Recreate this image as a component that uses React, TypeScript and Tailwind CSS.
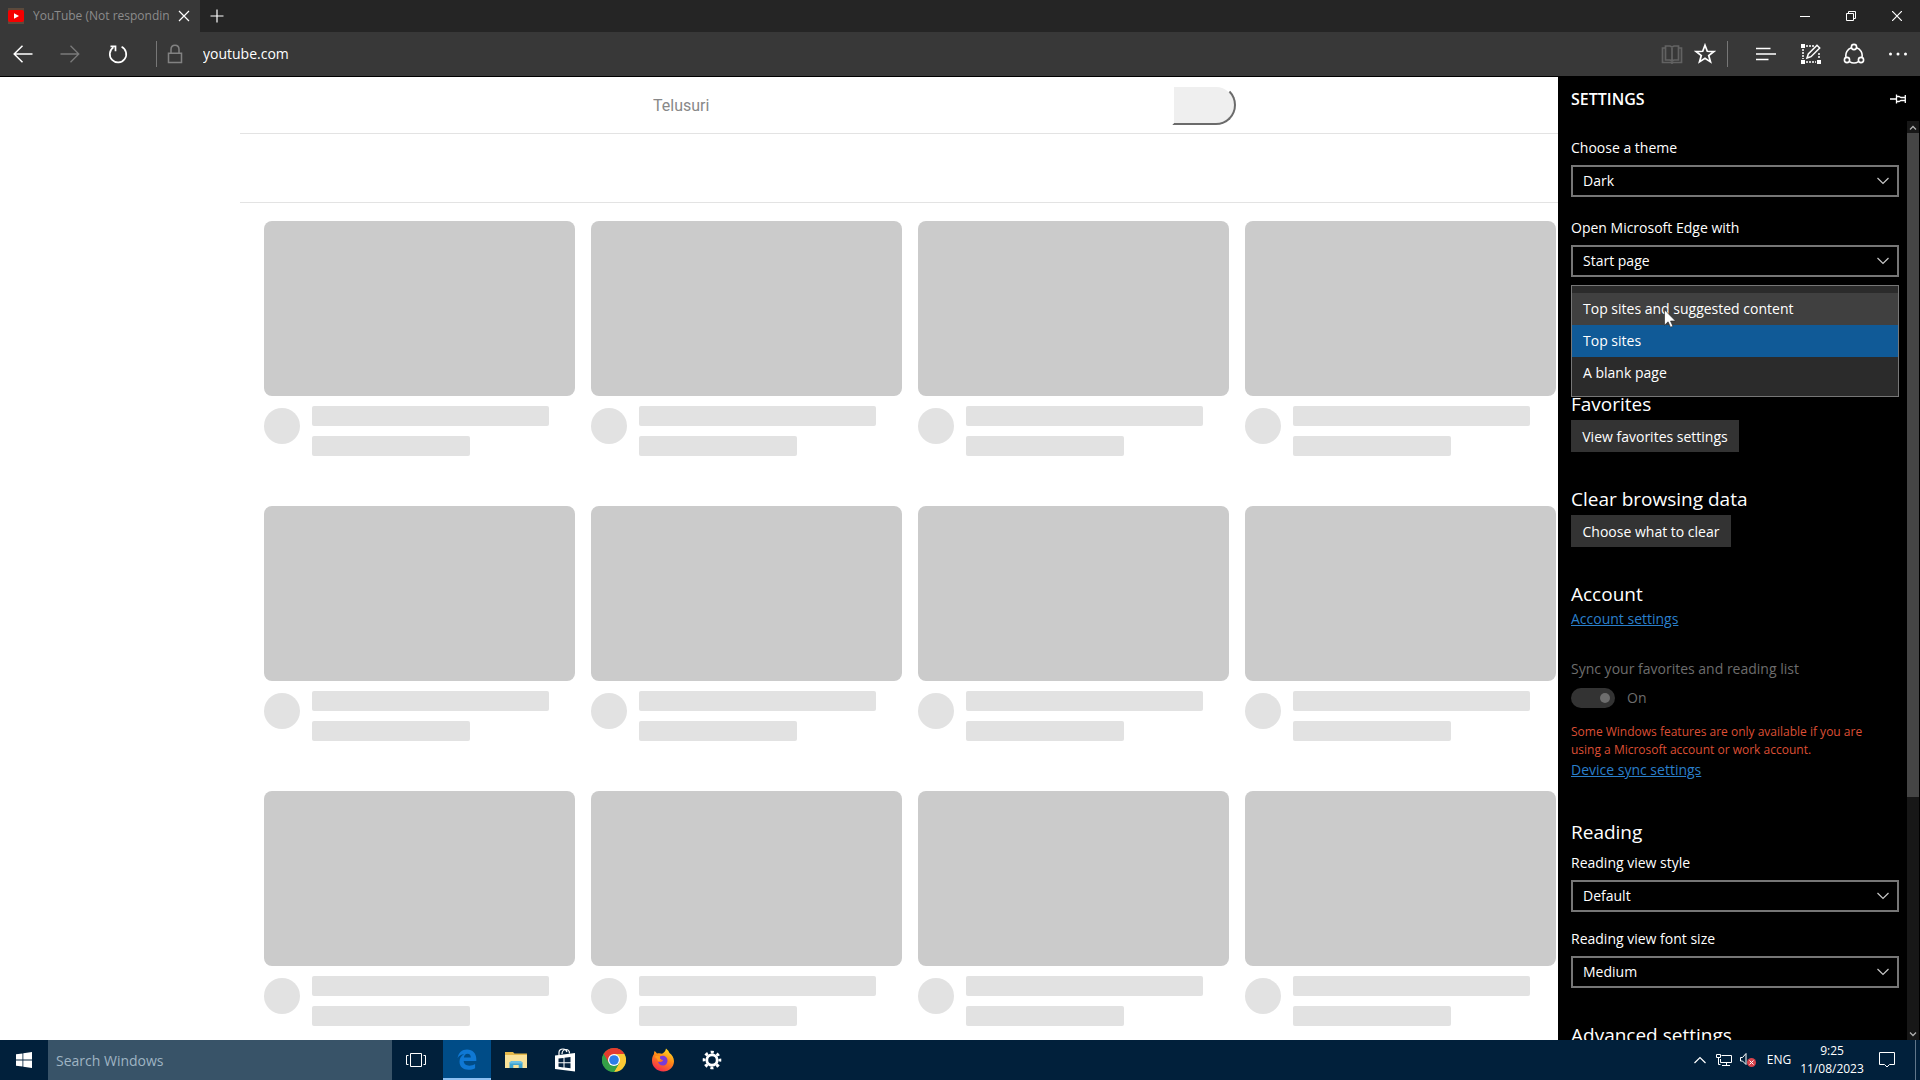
import React from 'react';

const UI = "font-['Open_Sans','Noto_Sans',sans-serif]";

type SvgProps = { w: number; h: number; className?: string; sw?: number; children: React.ReactNode };

function Icon({ w, h, className = '', sw = 1, children }: SvgProps) {
  return (
    <svg
      width={w}
      height={h}
      viewBox={`0 0 ${w} ${h}`}
      fill="none"
      stroke="currentColor"
      strokeWidth={sw}
      className={'shrink-0 ' + className}
      aria-hidden="true"
    >
      {children}
    </svg>
  );
}

function IconButton({ label, className = '', children }: { label: string; className?: string; children: React.ReactNode }) {
  return (
    <button type="button" aria-label={label} className={'flex h-full shrink-0 items-center justify-center ' + className}>
      {children}
    </button>
  );
}

function TabBar() {
  return (
    <div className="flex h-8 shrink-0 bg-[#252525] text-white">
      <div className="flex w-50 items-center bg-[#383838] pl-2">
        <svg width="16" height="16" viewBox="0 0 16 16" className="shrink-0" aria-hidden="true">
          <rect width="16" height="16" fill="#5c4a3c" />
          <rect y="2" width="16" height="12" rx="2" fill="#f40000" />
          <path d="M6 5.2 11 8 6 10.8Z" fill="#fff" />
        </svg>
        <span className="ml-[9px] w-[136px] overflow-hidden whitespace-nowrap text-[12px] leading-5 text-[#8c8c8c]">
          YouTube (Not responding)
        </span>
        <IconButton label="Close tab" className="ml-[3px] w-6">
          <Icon w={12} h={12} sw={1.2}>
            <path d="M1 1l10 10M11 1L1 11" />
          </Icon>
        </IconButton>
      </div>
      <IconButton label="New tab" className="w-[34px]">
        <Icon w={14} h={14} sw={1.2}>
          <path d="M7 .5v13M.5 7h13" />
        </Icon>
      </IconButton>
      <div className="flex-1" />
      <IconButton label="Minimize" className="w-[46px]">
        <Icon w={10} h={10}>
          <path d="M0 5.5h10" />
        </Icon>
      </IconButton>
      <IconButton label="Restore" className="w-[46px]">
        <Icon w={10} h={10}>
          <path d="M.5 2.5h7v7h-7zM2.5 2.5v-2h7v7h-2" />
        </Icon>
      </IconButton>
      <IconButton label="Close" className="w-[46px]">
        <Icon w={10} h={10} sw={1.2}>
          <path d="M0 0l10 10M10 0L0 10" />
        </Icon>
      </IconButton>
    </div>
  );
}

function Toolbar() {
  return (
    <div className="flex h-[45px] shrink-0 items-center border-b border-black bg-[#383838] text-white">
      <IconButton label="Back" className="w-[46px]">
        <Icon w={20} h={18} sw={1.5}>
          <path d="M19.500 9H1M9.500 .7 1.200 9l8.300 8.300" />
        </Icon>
      </IconButton>
      <IconButton label="Forward" className="w-12 text-[#7a7a7a]">
        <Icon w={20} h={18} sw={1.300}>
          <path d="M.5 9H19M10.500 .7 18.800 9l-8.300 8.300" />
        </Icon>
      </IconButton>
      <IconButton label="Refresh" className="w-12">
        <Icon w={20} h={20} sw={1.700}>
          <path d="M13.600 2.800a8.200 8.200 0 1 1-8.200 .6M2.500 2.300h5v5" />
        </Icon>
      </IconButton>
      <div className="ml-[14px] h-[26px] w-px bg-[#777]" />
      <Icon w={16} h={20} sw={1.500} className="ml-[10px] text-[#828282]">
        <path d="M1.500 9.200h13v9.300h-13zM4 9V5.500C4 3 5.500 1.200 8 1.200S12 3 12 5.500V9" />
      </Icon>
      <input
        aria-label="Address"
        defaultValue="youtube.com"
        className="ml-5 min-w-0 flex-1 bg-transparent text-[14px] leading-6 text-white outline-none"
      />
      <IconButton label="Reading view" className="w-8 text-[#626262]">
        <Icon w={22} h={20} sw={1.700}>
          <path d="M4.500 2H9l2 1 2-1h4.500v14H13l-2 1-2-1H4.500zM11 3v14M4.500 4H1.500v14.500H10l1 .7 1-.7h8.500V4h-3" />
        </Icon>
      </IconButton>
      <IconButton label="Add to favorites" className="w-[34px]">
        <Icon w={22} h={22} sw={1.700}>
          <path d="M11 2.200l2.300 6.100 6.500 .3-5.100 4 1.800 6.300L11 15.300l-5.500 3.600 1.800-6.300-5.100-4 6.500-.3z" />
        </Icon>
      </IconButton>
      <div className="ml-[5px] h-[26px] w-px bg-[#777]" />
      <IconButton label="Hub" className="ml-[15px] w-[46px]">
        <Icon w={20} h={14} sw={1.500}>
          <path d="M0 1.500h14.500M0 7h20M0 12.500h12.500" />
        </Icon>
      </IconButton>
      <IconButton label="Make a web note" className="w-[43px]">
        <Icon w={20} h={20} sw={1.500}>
          <path d="M5 2h8M2 5v10M5 18h10M18 9v6" strokeDasharray="2 1" />
          <path d="M0 0h4v4H0zM0 16h4v4H0zM16 16h4v4h-4z" fill="currentColor" stroke="none" />
          <path d="M6 14l1.300-4L16 1.300 18.700 4 10 12.700z" />
        </Icon>
      </IconButton>
      <IconButton label="Share" className="w-11">
        <Icon w={22} h={22} sw={1.600}>
          <circle cx="11" cy="4" r="2.600" />
          <circle cx="4" cy="17" r="2.600" />
          <circle cx="18" cy="17" r="2.600" />
          <path d="M8.400 4.700A8.300 8.300 0 0 0 3 14.200M13.600 4.700a8.300 8.300 0 0 1 5.400 9.500M6.500 18.600a8.300 8.300 0 0 0 9 0" />
        </Icon>
      </IconButton>
      <IconButton label="More" className="w-11">
        <Icon w={20} h={4}>
          <g fill="currentColor" stroke="none">
            <circle cx="2.500" cy="2" r="1.500" />
            <circle cx="10" cy="2" r="1.500" />
            <circle cx="17.500" cy="2" r="1.500" />
          </g>
        </Icon>
      </IconButton>
    </div>
  );
}

function VideoPlaceholder() {
  return (
    <div>
      <div className="h-[175px] rounded-lg bg-[#cbcbcb]" />
      <div className="flex gap-3 pt-[10px]">
        <div className="mt-[2px] size-9 shrink-0 rounded-full bg-[#e2e2e2]" />
        <div className="flex flex-1 flex-col gap-[10px]">
          <div className="h-5 w-[237px] rounded-xs bg-[#e2e2e2]" />
          <div className="h-5 w-[158px] rounded-xs bg-[#e2e2e2]" />
        </div>
      </div>
    </div>
  );
}

function Page() {
  return (
    <main className="min-w-0 flex-1 overflow-hidden bg-white pl-60">
      <div className="flex h-[57px] items-center border-b border-[#e3e3e3] pl-[413px]">
        <input
          aria-label="Telusuri"
          placeholder="Telusuri"
          className="w-[519px] bg-transparent pt-[2px] font-['Roboto',sans-serif] text-[16px] leading-6 outline-none placeholder:text-[#888]"
        />
        <button
          type="button"
          aria-label="Cari"
          className="h-10 w-16 rounded-r-full border-2 border-t-white border-r-[#6b6b6b] border-b-[#6b6b6b] border-l-white bg-[#efefef]"
        />
      </div>
      <div className="h-[69px] border-b border-[#e3e3e3]" />
      <div className="grid grid-cols-4 gap-x-4 gap-y-[50px] pt-[18px] pr-[2px] pl-6">
        {Array.from({ length: 12 }, (_, i) => (
          <VideoPlaceholder key={i} />
        ))}
      </div>
    </main>
  );
}

function Field({ id, label, value, className }: { id: string; label: string; value: string; className: string }) {
  return (
    <div className={className}>
      <label htmlFor={id} className="block h-6 text-[14px] leading-6">
        {label}
      </label>
      <div className="relative mt-[5px]">
        <select
          id={id}
          className="block h-8 w-full appearance-none border-2 border-[#767676] bg-black pb-[2px] pl-[10px] text-[14px] text-white outline-none"
        >
          <option>{value}</option>
        </select>
        <Icon w={12} h={8} sw={1.200} className="pointer-events-none absolute top-3 right-[10px] text-[#c8c8c8]">
          <path d="M.5 1 6 6.500 11.500 1" />
        </Icon>
      </div>
    </div>
  );
}

function Heading({ className = '', children }: { className?: string; children: React.ReactNode }) {
  return <h2 className={'h-7 whitespace-nowrap text-[19px] leading-7 ' + className}>{children}</h2>;
}

function OpenList() {
  return (
    <div className="relative mt-2 h-[105px]">
      <ul
        role="listbox"
        aria-label="Open new tabs with"
        className="absolute inset-x-0 top-0 z-10 border border-[#777] bg-[#2b2b2b] py-[7px] text-[14px] leading-8"
      >
        <li role="option" aria-selected="false" className="h-8 bg-[#404040] pl-[11px]">
          Top sites and suggested content
        </li>
        <li role="option" aria-selected="true" className="h-8 bg-[#105a97] pl-[11px]">
          Top sites
        </li>
        <li role="option" aria-selected="false" className="h-8 pl-[11px]">
          A blank page
        </li>
      </ul>
      <svg width="12" height="19" viewBox="0 0 12 19" className="absolute top-6 left-[93px] z-20" aria-hidden="true">
        <path d="M.5 .8v15.400l3.600-3.400 2.400 5.400 2.400-1-2.400-5.200h5z" fill="#fff" stroke="#222" strokeWidth=".6" />
      </svg>
    </div>
  );
}

function SettingsPanel() {
  return (
    <aside className="flex w-[362px] shrink-0 flex-col overflow-hidden bg-black text-white">
      <div className="flex h-11 shrink-0 items-center justify-between pr-[14px] pl-[13px]">
        <h1 className="text-[16px] leading-6 font-semibold">SETTINGS</h1>
        <button type="button" aria-label="Pin this pane">
          <Icon w={16} h={10} sw={1.300}>
            <path d="M0 5h6M6.500 .5v9M6.500 2.500h2.500l2 1h4M6.500 7.500h2.500l2-1h4M15.300 1v8" />
          </Icon>
        </button>
      </div>
      <div className="flex min-h-0 flex-1">
        <div className="min-w-0 flex-1 overflow-hidden pr-2 pl-[13px]">
          <Field id="theme" label="Choose a theme" value="Dark" className="mt-[15px]" />
          <Field id="open-with" label="Open Microsoft Edge with" value="Start page" className="mt-[19px]" />
          <OpenList />
          <Heading>Favorites</Heading>
          <button type="button" className="mt-[2px] block h-8 w-[168px] bg-[#333] text-[14px] whitespace-nowrap">
            View favorites settings
          </button>
          <Heading className="mt-[33px]">Clear browsing data</Heading>
          <button type="button" className="mt-[2px] block h-8 w-40 bg-[#333] text-[14px] whitespace-nowrap">
            Choose what to clear
          </button>
          <Heading className="mt-[33px]">Account</Heading>
          <a href="#account" className="block h-[22px] text-[14px] leading-[22px] text-[#2a7fcb] underline">
            Account settings
          </a>
          <label htmlFor="sync" className="mt-[27px] block h-6 text-[14px] leading-6 text-[#6d6d6d]">
            Sync your favorites and reading list
          </label>
          <div className="mt-[7px] flex h-5 items-center gap-3 text-[#6d6d6d]">
            <div className="relative h-5 w-11">
              <input
                id="sync"
                type="checkbox"
                role="switch"
                defaultChecked
                disabled
                className="block h-5 w-11 appearance-none rounded-full bg-[#333]"
              />
              <span className="pointer-events-none absolute top-[5px] right-[5px] size-[10px] rounded-full bg-[#6d6d6d]" />
            </div>
            <span className="text-[14px] leading-5">On</span>
          </div>
          <p className="mt-[15px] text-[12px] leading-[18px] whitespace-nowrap text-[#dd4f35]">
            Some Windows features are only available if you are
            <br />
            using a Microsoft account or work account.
          </p>
          <a href="#sync" className="block h-[22px] text-[14px] leading-[22px] text-[#2a7fcb] underline">
            Device sync settings
          </a>
          <Heading className="mt-[37px]">Reading</Heading>
          <Field id="style" label="Reading view style" value="Default" className="mt-[5px]" />
          <Field id="size" label="Reading view font size" value="Medium" className="mt-[15px]" />
          <Heading className="mt-[33px]">Advanced settings</Heading>
        </div>
        <div className="mr-px flex w-3 flex-col bg-[#171717] text-[#b0b0b0]">
          <div className="flex h-3 items-center justify-center">
            <Icon w={8} h={5} sw={1.300}>
              <path d="M1 4.500l3-3 3 3" />
            </Icon>
          </div>
          <div className="h-[664px] bg-[#454545]" />
          <div className="flex-1" />
          <div className="flex h-3 items-center justify-center">
            <Icon w={8} h={5} sw={1.300}>
              <path d="M1 .5l3 3 3-3" />
            </Icon>
          </div>
        </div>
      </div>
    </aside>
  );
}

function EdgeLogo() {
  return (
    <svg width="20" height="21" viewBox="0 0 20 21" aria-hidden="true">
      <path
        d="M.6 9.200C1.400 3.800 5 .5 10 .5c5.700 0 9.300 3.900 9.300 9.500v2.100H6.700c.2 3.300 2.600 4.600 5.500 4.600 2.300 0 4.100-.6 5.900-1.700v4.200c-2 1.100-4.300 1.600-6.700 1.600-5.300 0-8.900-3.100-8.900-8 0-3.400 1.700-6 4.600-7.500C3.900 5.500 1.800 6.900 .6 9.200Zm6.300-.8h6.900c0-2.300-1.100-3.700-3.300-3.700-2 0-3.300 1.500-3.600 3.700Z"
        fill="#0f78d4"
      />
    </svg>
  );
}

function ExplorerLogo() {
  return (
    <svg width="22" height="18" viewBox="0 0 22 18" aria-hidden="true">
      <path d="M0 1h8l1.500 1.500H22V17H0z" fill="#e5b94b" />
      <path d="M0 4h22v13H0z" fill="#f9e29a" />
      <path d="M4.500 17v-5.500l2-1.500h9l2 1.500V17h-3.800v-3H8.300v3z" fill="#3fa3d0" />
      <path d="M4.500 12.500h13v-1l-2-1.500h-9l-2 1.500z" fill="#6cc0e4" />
    </svg>
  );
}

function StoreLogo() {
  return (
    <svg width="22" height="24" viewBox="0 0 22 24" aria-hidden="true">
      <path d="M5 7V4.500C5 2 7 1 9 1s3.500 1 4 3M8 6c0-3 2-4.500 4-4.500S15.500 3 15.500 5.500" fill="none" stroke="#fff" strokeWidth="1.200" />
      <path d="M1 7.500 21 5v18.500L1 21z" fill="#fff" />
      <path d="M4.500 10.500l5-.6v4.300h-5zM10.500 9.800l6-.8v5.200h-6zM4.500 15.200h5v4.200l-5-.6zM10.500 15.200h6v5.100l-6-.8z" fill="#05213d" />
    </svg>
  );
}

function ChromeLogo() {
  return (
    <svg width="24" height="24" viewBox="0 0 24 24" aria-hidden="true">
      <circle cx="12" cy="12" r="12" fill="#34a047" />
      <path d="M12 12 1.600 6A12 12 0 0 1 22.400 6z" fill="#e33b2e" />
      <path d="M12 0a12 12 0 0 1 10.400 6H12z" fill="#e33b2e" />
      <path d="M22.400 6A12 12 0 0 1 12 24l5.200-9L12 6z" fill="#fcc934" />
      <path d="M1.600 6 6.800 15 12 12V6z" fill="#e33b2e" />
      <path d="M1.600 6A12 12 0 0 0 12 24l5.200-9H6.800z" fill="#34a047" />
      <circle cx="12" cy="12" r="6" fill="#fff" />
      <circle cx="12" cy="12" r="4.800" fill="#2d7de8" />
    </svg>
  );
}

function FirefoxLogo() {
  return (
    <svg width="24" height="24" viewBox="0 0 24 24" aria-hidden="true">
      <defs>
        <linearGradient id="fox" x1=".8" y1="0" x2=".3" y2="1">
          <stop offset="0" stopColor="#ffe226" />
          <stop offset=".45" stopColor="#ff8a16" />
          <stop offset="1" stopColor="#f5274e" />
        </linearGradient>
      </defs>
      <path
        d="M15 .5c2 1.500 3 3 3.500 4.500 2.500 1.500 4.500 5 4.500 8.300C23 19 18.200 23.500 12.300 23.500 6 23.500 1 18.800 1 12.800c0-2.800.7-5 2-6.800 0 0 0-1.500.6-3C5 4 5.500 5 6 5.500c2-.6 3.800-.3 5 .3C12.500 5 14.500 3.500 15 .5Z"
        fill="url(#fox)"
      />
      <path d="M9 8.500c3-1.800 7.500 0 7.500 4 0 3-2 5-4.500 5-3 0-4.800-2-5-4 1 .8 2.500.8 4 0 1-.6 1.500-1.500 0-1.800-1.500-.2-2.500-.7-2-3.200Z" fill="#7a3bd8" />
      <path d="M3.500 9c1.500-1.500 4-1.500 5.500-.5-.5 1.500 0 2.500 1.200 3-1 1-2.200 1.800-3.200 1.800C6.500 11 5 9.500 3.500 9Z" fill="#ff9a1e" />
    </svg>
  );
}

function GearLogo() {
  return (
    <svg width="20" height="20" viewBox="0 0 20 20" fill="none" stroke="#fff" aria-hidden="true">
      <circle cx="10" cy="10" r="5.200" strokeWidth="2.800" />
      <circle cx="10" cy="10" r="7.900" strokeWidth="2.800" strokeDasharray="3.100 3.105" strokeDashoffset="1.550" />
    </svg>
  );
}

function Taskbar() {
  const apps = [
    { name: 'File Explorer', logo: <ExplorerLogo /> },
    { name: 'Store', logo: <StoreLogo /> },
    { name: 'Chrome', logo: <ChromeLogo /> },
    { name: 'Firefox', logo: <FirefoxLogo /> },
    { name: 'Settings', logo: <GearLogo /> },
  ];
  return (
    <footer className="flex h-10 shrink-0 items-center bg-[#01203b] text-white">
      <IconButton label="Start" className="w-12">
        <svg width="16" height="16" viewBox="0 0 16 16" fill="#fff" aria-hidden="true">
          <path d="M0 2.300 6.500 1.400v6.200H0zM7.300 1.300 16 0v7.600H7.300zM0 8.400h6.500v6.200L0 13.700zM7.300 8.400H16V16l-8.700-1.300z" />
        </svg>
      </IconButton>
      <input
        aria-label="Search Windows"
        placeholder="Search Windows"
        className="h-full w-[344px] bg-[#385368] pl-2 text-[14px] outline-none placeholder:text-[#9fb4c3]"
      />
      <IconButton label="Task view" className="w-12">
        <Icon w={20} h={14}>
          <path d="M4.500 .5h11v13h-11zM2.500 2.500h-2v9h2M17.500 2.500h2v9h-2" />
        </Icon>
      </IconButton>
      <IconButton label="Microsoft Edge" className="ml-[3px] w-12 border-b-2 border-[#8cc0f2] bg-[#004c87]">
        <EdgeLogo />
      </IconButton>
      {apps.map((a) => (
        <IconButton key={a.name} label={a.name} className="ml-px w-12">
          {a.logo}
        </IconButton>
      ))}
      <div className="flex-1" />
      <IconButton label="Show hidden icons" className="w-6">
        <Icon w={12} h={8} sw={1.200}>
          <path d="M.5 7 6 1.500 11.500 7" />
        </Icon>
      </IconButton>
      <IconButton label="Network" className="w-6">
        <Icon w={16} h={14}>
          <path d="M5.500 2.500h10v7h-11V6M10.500 9.500v3M6 12.500h8M.5 1.500h4v3h-4zM2.500 4.500v7h2" />
        </Icon>
      </IconButton>
      <IconButton label="Volume muted" className="w-6">
        <Icon w={16} h={14}>
          <path d="M.5 4.500h2l3.500-4v11l-3.500-3.500h-2z" />
          <circle cx="11.500" cy="9.500" r="4.500" fill="#d8434c" stroke="none" />
          <path d="M9.500 7.500l4 4M13.500 7.500l-4 4" stroke="#fff" />
        </Icon>
      </IconButton>
      <button type="button" className="h-full w-[38px] text-[12px]">
        ENG
      </button>
      <button type="button" className="h-full w-[68px] text-[12px] leading-[18px] whitespace-nowrap">
        9:25
        <br />
        11/08/2023
      </button>
      <IconButton label="Notifications" className="ml-px w-10">
        <Icon w={16} h={16}>
          <path d="M.5 .5h15v12h-5L8 15l-2.500-2.500h-5z" />
        </Icon>
      </IconButton>
      <div className="ml-2 h-full w-px bg-[#60768a]" />
      <button type="button" aria-label="Show desktop" className="h-full w-1" />
    </footer>
  );
}

export default function App() {
  return (
    <div className={'flex h-screen flex-col overflow-hidden ' + UI}>
      <TabBar />
      <Toolbar />
      <div className="flex min-h-0 flex-1">
        <Page />
        <SettingsPanel />
      </div>
      <Taskbar />
    </div>
  );
}
